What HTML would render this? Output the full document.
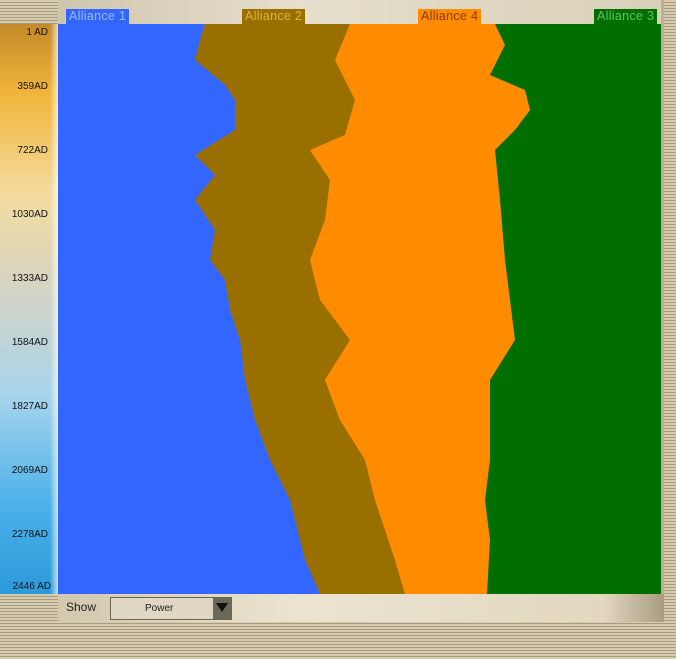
<!DOCTYPE html><html><head><style>
body{margin:0;width:676px;height:659px;overflow:hidden;position:relative;font-family:"Liberation Sans",sans-serif;
background:repeating-linear-gradient(180deg,#d8ccb0 0 2px,#a89c80 2px 3px);}
.top{position:absolute;left:58px;top:0;width:606px;height:24px;background:linear-gradient(90deg,#cfc6ae,#e6dfcc 40%,#d9d0b8);}
.left{position:absolute;left:0;top:24px;width:58px;height:570px;background:linear-gradient(180deg,#c48a28 0%,#f0b43a 12%,#f4dca0 30%,#d8d4c0 45%,#a8d4ec 65%,#4ab0ea 85%,#2a9ad8 100%);}
.left::after{content:"";position:absolute;right:0;top:0;width:8px;height:100%;background:linear-gradient(90deg,rgba(255,255,255,0),rgba(255,255,240,.7));}
.lab{position:absolute;right:10px;font-size:10px;color:#111;font-family:"Liberation Sans",sans-serif;}
.tag{position:absolute;top:9px;height:15px;font-size:12.5px;line-height:15px;padding:0 3px;letter-spacing:0.3px}
.bot{position:absolute;left:58px;top:594px;width:606px;height:28px;background:linear-gradient(90deg,#d2c8ae,#ece4d0 40%,#e2d8c0 90%,#a89c80);}
.right{position:absolute;left:661px;top:0;width:3px;height:622px;background:#bbb098}
</style></head><body>
<div class="top"></div>
<div class="left">
<div class="lab" style="top:3px">1 AD</div>
<div class="lab" style="top:57px">359AD</div>
<div class="lab" style="top:121px">722AD</div>
<div class="lab" style="top:185px">1030AD</div>
<div class="lab" style="top:249px">1333AD</div>
<div class="lab" style="top:313px">1584AD</div>
<div class="lab" style="top:377px">1827AD</div>
<div class="lab" style="top:441px">2069AD</div>
<div class="lab" style="top:505px">2278AD</div>
<div class="lab" style="top:557px;right:7px">2446 AD</div>
</div>
<div class="tag" style="left:66px;background:#3366ff;color:#9ab8ff">Alliance 1</div>
<div class="tag" style="left:242px;background:#997000;color:#e0b040">Alliance 2</div>
<div class="tag" style="left:418px;background:#ff8c00;color:#8a3a00">Alliance 4</div>
<div class="tag" style="left:594px;background:#006f00;color:#60c060">Alliance 3</div>
<svg style="position:absolute;left:0;top:0" width="676" height="659">
<rect x="58" y="24" width="603" height="570" fill="#006f00"/>
<polygon fill="#ff8c00" points="58,24 495,24 505,45 490,75 525,90 530,110 515,130 495,150 500,200 505,260 510,300 515,340 490,380 490,420 490,460 485,500 490,540 487,594 58,594"/>
<polygon fill="#997000" points="58,24 350,24 335,60 355,100 345,135 310,150 330,180 325,220 310,260 320,300 350,340 325,380 340,420 365,460 375,500 385,530 395,560 405,594 58,594"/>
<polygon fill="#3366ff" points="58,24 205,24 200,40 195,60 225,85 235,100 235,130 195,155 215,175 195,200 215,230 210,260 225,280 230,310 240,340 245,380 255,420 270,460 290,500 300,540 305,560 320,594 58,594"/>
</svg>
<div class="right"></div>
<div class="bot">
<div style="position:absolute;left:8px;top:6px;font-size:12px;color:#222">Show</div>
<div style="position:absolute;left:52px;top:3px;width:120px;height:21px;border:1px solid #6a6450;background:#e0d8c4">
<div style="position:absolute;left:34px;top:5px;font-size:10px;color:#222">Power</div>
<div style="position:absolute;right:0;top:0;width:18px;height:21px;background:#6a6a58"><div style="margin:5px 0 0 3px;width:0;height:0;border-left:6px solid transparent;border-right:6px solid transparent;border-top:9px solid #111"></div></div>
</div></div>
</body></html>
